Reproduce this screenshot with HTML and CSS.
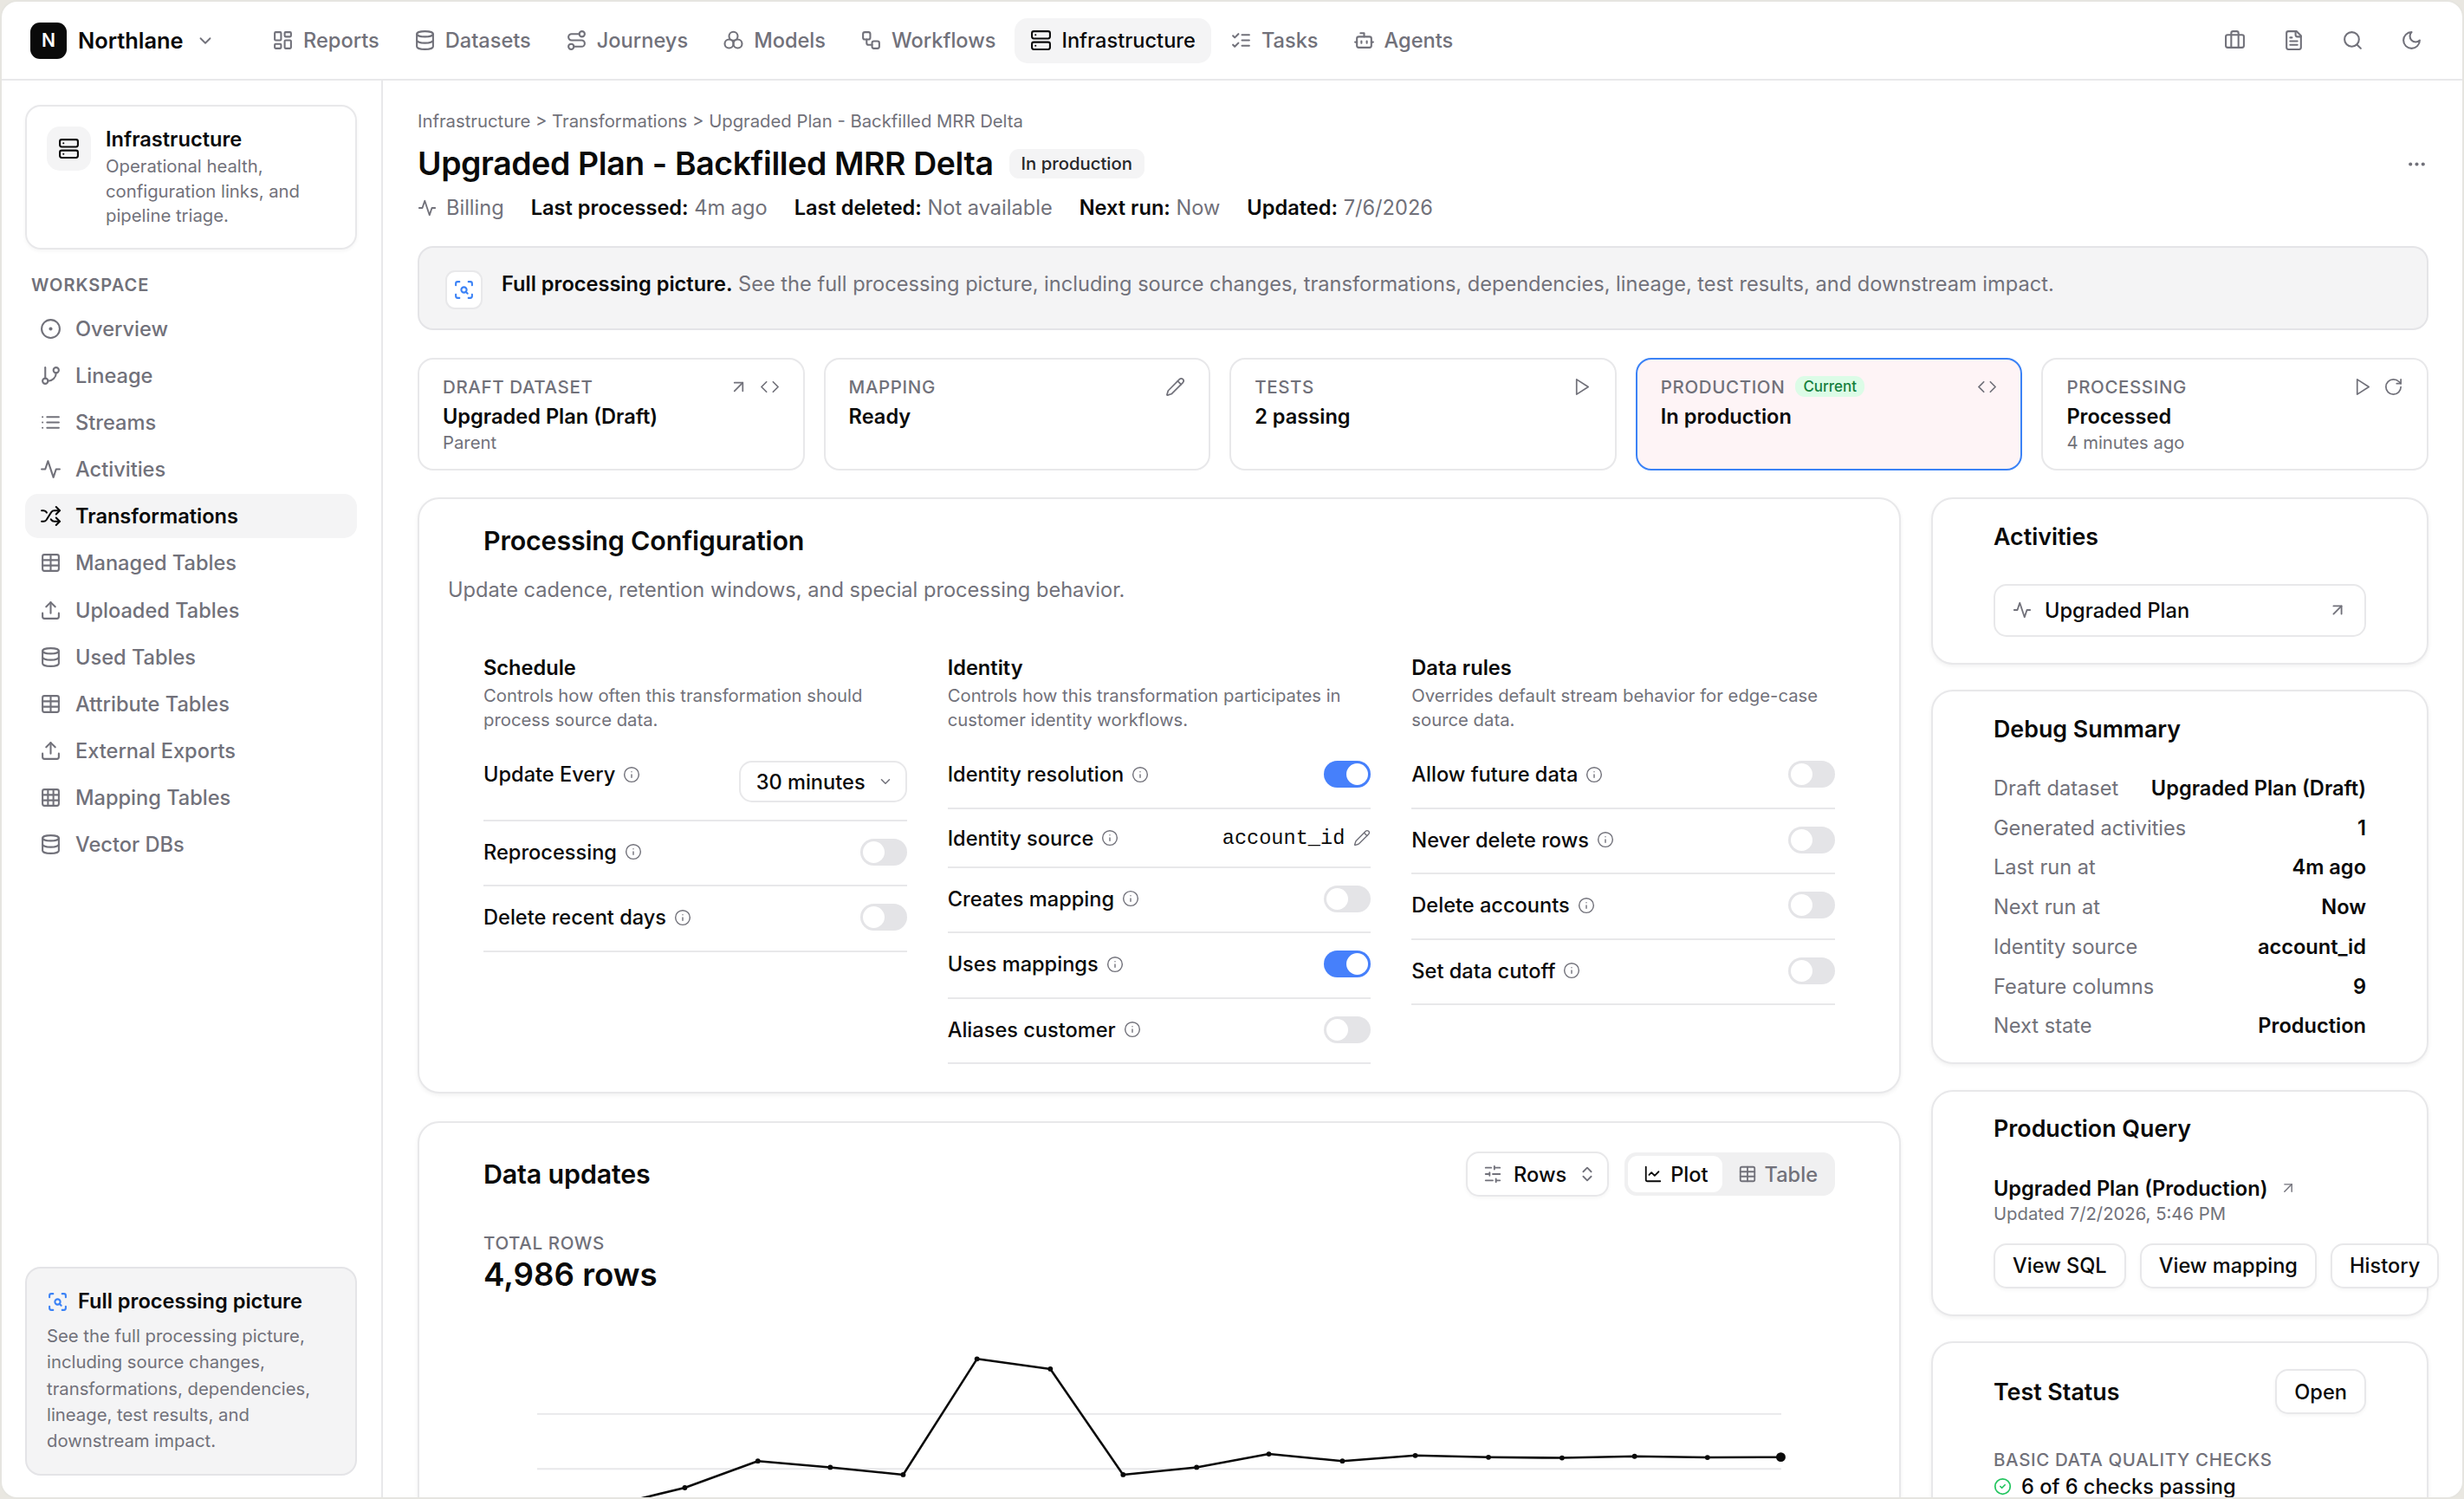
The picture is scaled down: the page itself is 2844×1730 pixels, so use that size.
FILE: index.html
```html
<!DOCTYPE html>
<html>
<head>
<title>Northlane</title>
<meta charset="UTF-8">
<link rel="stylesheet" href="styles.css">
</head>
<body>

<svg class="sprite" xmlns="http://www.w3.org/2000/svg">
  <symbol id="i-reports" viewBox="0 0 24 24"><rect x="3" y="3" width="7" height="9" rx="1"/><rect x="14" y="3" width="7" height="5" rx="1"/><rect x="14" y="12" width="7" height="9" rx="1"/><rect x="3" y="16" width="7" height="5" rx="1"/></symbol>
  <symbol id="i-db" viewBox="0 0 24 24"><ellipse cx="12" cy="5" rx="9" ry="3"/><path d="M3 5v14a9 3 0 0 0 18 0V5"/><path d="M3 12a9 3 0 0 0 18 0"/></symbol>
  <symbol id="i-route" viewBox="0 0 24 24"><circle cx="6" cy="19" r="3"/><path d="M9 19h8.5a3.5 3.5 0 0 0 0-7h-11a3.5 3.5 0 0 1 0-7H15"/><circle cx="18" cy="5" r="3"/></symbol>
  <symbol id="i-models" viewBox="0 0 24 24"><circle cx="12" cy="7.5" r="4.8"/><circle cx="7.2" cy="15.8" r="4.8"/><circle cx="16.8" cy="15.8" r="4.8"/></symbol>
  <symbol id="i-workflow" viewBox="0 0 24 24"><rect x="3" y="3" width="8" height="8" rx="2"/><path d="M7 11v4a2 2 0 0 0 2 2h4"/><rect x="13" y="13" width="8" height="8" rx="2"/></symbol>
  <symbol id="i-server" viewBox="0 0 24 24"><rect x="2" y="2" width="20" height="8" rx="2"/><rect x="2" y="14" width="20" height="8" rx="2"/><path d="M6 6h.01"/><path d="M6 18h.01"/></symbol>
  <symbol id="i-tasks" viewBox="0 0 24 24"><path d="m3 17 2 2 4-4"/><path d="m3 7 2 2 4-4"/><path d="M13 6h8"/><path d="M13 12h8"/><path d="M13 18h8"/></symbol>
  <symbol id="i-bot" viewBox="0 0 24 24"><path d="M12 8V4H8"/><rect x="4" y="8" width="16" height="12" rx="2"/><path d="M2 14h2"/><path d="M20 14h2"/><path d="M15 13v2"/><path d="M9 13v2"/></symbol>
  <symbol id="i-case" viewBox="0 0 24 24"><path d="M16 20V4a2 2 0 0 0-2-2h-4a2 2 0 0 0-2 2v16"/><rect x="2" y="6" width="20" height="14" rx="2"/></symbol>
  <symbol id="i-file" viewBox="0 0 24 24"><path d="M15 2H6a2 2 0 0 0-2 2v16a2 2 0 0 0 2 2h12a2 2 0 0 0 2-2V7Z"/><path d="M14 2v4a2 2 0 0 0 2 2h4"/><path d="M10 9H8"/><path d="M16 13H8"/><path d="M16 17H8"/></symbol>
  <symbol id="i-search" viewBox="0 0 24 24"><circle cx="11" cy="11" r="8"/><path d="m21 21-4.3-4.3"/></symbol>
  <symbol id="i-moon" viewBox="0 0 24 24"><path d="M12 3a6 6 0 0 0 9 9 9 9 0 1 1-9-9Z"/></symbol>
  <symbol id="i-chevron" viewBox="0 0 24 24"><path d="m6 9 6 6 6-6"/></symbol>
  <symbol id="i-dot" viewBox="0 0 24 24"><circle cx="12" cy="12" r="10"/><circle cx="12" cy="12" r="1"/></symbol>
  <symbol id="i-branch" viewBox="0 0 24 24"><path d="M6 3v12"/><circle cx="18" cy="6" r="3"/><circle cx="6" cy="18" r="3"/><path d="M18 9a9 9 0 0 1-9 9"/></symbol>
  <symbol id="i-list" viewBox="0 0 24 24"><path d="M3 12h.01"/><path d="M3 18h.01"/><path d="M3 6h.01"/><path d="M8 12h13"/><path d="M8 18h13"/><path d="M8 6h13"/></symbol>
  <symbol id="i-activity" viewBox="0 0 24 24"><path d="M22 12h-4l-3 9L9 3l-3 9H2"/></symbol>
  <symbol id="i-shuffle" viewBox="0 0 24 24"><path d="m18 14 4 4-4 4"/><path d="m18 2 4 4-4 4"/><path d="M2 18h1.973a4 4 0 0 0 3.3-1.7l5.454-8.6a4 4 0 0 1 3.3-1.7H22"/><path d="M2 6h1.972a4 4 0 0 1 3.6 2.2"/><path d="M22 18h-6.041a4 4 0 0 1-3.3-1.8l-.359-.45"/></symbol>
  <symbol id="i-table" viewBox="0 0 24 24"><rect x="3" y="3" width="18" height="18" rx="2"/><path d="M3 9h18"/><path d="M3 15h18"/><path d="M12 3v18"/></symbol>
  <symbol id="i-grid" viewBox="0 0 24 24"><rect x="3" y="3" width="18" height="18" rx="2"/><path d="M3 9h18"/><path d="M3 15h18"/><path d="M9 3v18"/><path d="M15 3v18"/></symbol>
  <symbol id="i-upload" viewBox="0 0 24 24"><path d="M21 15v4a2 2 0 0 1-2 2H5a2 2 0 0 1-2-2v-4"/><path d="m17 8-5-5-5 5"/><path d="M12 3v12"/></symbol>
  <symbol id="i-scan" viewBox="0 0 24 24"><path d="M3 7V5a2 2 0 0 1 2-2h2"/><path d="M17 3h2a2 2 0 0 1 2 2v2"/><path d="M21 17v2a2 2 0 0 1-2 2h-2"/><path d="M7 21H5a2 2 0 0 1-2-2v-2"/><circle cx="12" cy="12" r="3"/><path d="m16 16-1.9-1.9"/></symbol>
  <symbol id="i-arrow" viewBox="0 0 24 24"><path d="M7 7h10v10"/><path d="M7 17 17 7"/></symbol>
  <symbol id="i-code" viewBox="0 0 24 24"><path d="m16 18 6-6-6-6"/><path d="m8 6-6 6 6 6"/></symbol>
  <symbol id="i-pencil" viewBox="0 0 24 24"><path d="M21.174 6.812a1 1 0 0 0-3.986-3.987L3.842 16.174a2 2 0 0 0-.5.83l-1.321 4.352a.5.5 0 0 0 .623.622l4.353-1.32a2 2 0 0 0 .83-.497z"/><path d="m15 5 4 4"/></symbol>
  <symbol id="i-play" viewBox="0 0 24 24"><path d="M6 3l14 9-14 9z"/></symbol>
  <symbol id="i-refresh" viewBox="0 0 24 24"><path d="M21 12a9 9 0 1 1-9-9c2.52 0 4.93 1 6.74 2.74L21 8"/><path d="M21 3v5h-5"/></symbol>
  <symbol id="i-info" viewBox="0 0 24 24"><circle cx="12" cy="12" r="10"/><path d="M12 16v-4"/><path d="M12 8h.01"/></symbol>
  <symbol id="i-sliders" viewBox="0 0 24 24"><path d="M21 4h-7"/><path d="M10 4H3"/><path d="M21 12h-9"/><path d="M8 12H3"/><path d="M21 20h-5"/><path d="M12 20H3"/><path d="M14 2v4"/><path d="M8 10v4"/><path d="M16 18v4"/></symbol>
  <symbol id="i-updown" viewBox="0 0 24 24"><path d="m7 15 5 5 5-5"/><path d="m7 9 5-5 5 5"/></symbol>
  <symbol id="i-chart" viewBox="0 0 24 24"><path d="M3 3v16a2 2 0 0 0 2 2h16"/><path d="m19 9-5 5-4-4-3 3"/></symbol>
  <symbol id="i-check" viewBox="0 0 24 24"><circle cx="12" cy="12" r="10"/><path d="m9 12 2 2 4-4"/></symbol>
  <symbol id="i-more" viewBox="0 0 24 24"><circle cx="5" cy="12" r="1"/><circle cx="12" cy="12" r="1"/><circle cx="19" cy="12" r="1"/></symbol>
</svg>

<div class="app">

  <header class="topbar">
    <div class="brand">
      <span class="logo">N</span>
      <span class="brand-name">Northlane</span>
      <svg class="ico ico-sm"><use href="#i-chevron"/></svg>
    </div>
    <nav class="topnav">
      <a class="topnav-item"><svg class="ico"><use href="#i-reports"/></svg>Reports</a>
      <a class="topnav-item"><svg class="ico"><use href="#i-db"/></svg>Datasets</a>
      <a class="topnav-item"><svg class="ico"><use href="#i-route"/></svg>Journeys</a>
      <a class="topnav-item"><svg class="ico"><use href="#i-models"/></svg>Models</a>
      <a class="topnav-item"><svg class="ico"><use href="#i-workflow"/></svg>Workflows</a>
      <a class="topnav-item active"><svg class="ico"><use href="#i-server"/></svg>Infrastructure</a>
      <a class="topnav-item"><svg class="ico"><use href="#i-tasks"/></svg>Tasks</a>
      <a class="topnav-item"><svg class="ico"><use href="#i-bot"/></svg>Agents</a>
    </nav>
    <div class="top-tools">
      <svg class="ico"><use href="#i-case"/></svg>
      <svg class="ico"><use href="#i-file"/></svg>
      <svg class="ico"><use href="#i-search"/></svg>
      <svg class="ico"><use href="#i-moon"/></svg>
    </div>
  </header>

  <div class="body-wrap">

    <aside class="sidebar">
      <div class="side-card">
        <span class="side-card-icon"><svg class="ico ico-dark"><use href="#i-server"/></svg></span>
        <div>
          <div class="side-card-title">Infrastructure</div>
          <div class="side-card-desc">Operational health, configuration links, and pipeline triage.</div>
        </div>
      </div>

      <div class="side-heading">WORKSPACE</div>
      <nav class="sidenav">
        <a class="sidenav-item"><svg class="ico"><use href="#i-dot"/></svg>Overview</a>
        <a class="sidenav-item"><svg class="ico"><use href="#i-branch"/></svg>Lineage</a>
        <a class="sidenav-item"><svg class="ico"><use href="#i-list"/></svg>Streams</a>
        <a class="sidenav-item"><svg class="ico"><use href="#i-activity"/></svg>Activities</a>
        <a class="sidenav-item active"><svg class="ico ico-dark"><use href="#i-shuffle"/></svg>Transformations</a>
        <a class="sidenav-item"><svg class="ico"><use href="#i-table"/></svg>Managed Tables</a>
        <a class="sidenav-item"><svg class="ico"><use href="#i-upload"/></svg>Uploaded Tables</a>
        <a class="sidenav-item"><svg class="ico"><use href="#i-db"/></svg>Used Tables</a>
        <a class="sidenav-item"><svg class="ico"><use href="#i-table"/></svg>Attribute Tables</a>
        <a class="sidenav-item"><svg class="ico"><use href="#i-upload"/></svg>External Exports</a>
        <a class="sidenav-item"><svg class="ico"><use href="#i-grid"/></svg>Mapping Tables</a>
        <a class="sidenav-item"><svg class="ico"><use href="#i-db"/></svg>Vector DBs</a>
      </nav>

      <div class="side-callout">
        <div class="side-callout-title"><svg class="ico ico-blue"><use href="#i-scan"/></svg>Full processing picture</div>
        <div class="side-callout-desc">See the full processing picture, including source changes, transformations, dependencies, lineage, test results, and downstream impact.</div>
      </div>
    </aside>

    <main class="main">
      <div class="crumbs">Infrastructure &gt; Transformations &gt; Upgraded Plan - Backfilled MRR Delta</div>
      <div class="title-row">
        <h1>Upgraded Plan - Backfilled MRR Delta</h1>
        <span class="badge">In production</span>
        <svg class="ico title-more"><use href="#i-more"/></svg>
      </div>
      <div class="meta">
        <span class="meta-source"><svg class="ico"><use href="#i-activity"/></svg>Billing</span>
        <span><b>Last processed:</b> 4m ago</span>
        <span><b>Last deleted:</b> Not available</span>
        <span><b>Next run:</b> Now</span>
        <span><b>Updated:</b> 7/6/2026</span>
      </div>

      <div class="banner">
        <span class="banner-icon"><svg class="ico ico-blue"><use href="#i-scan"/></svg></span>
        <p><b>Full processing picture.</b> See the full processing picture, including source changes, transformations, dependencies, lineage, test results, and downstream impact.</p>
      </div>

      <div class="steps">
        <div class="step">
          <div class="step-head">
            <span class="label">DRAFT DATASET</span>
            <span class="step-tools"><svg class="ico"><use href="#i-arrow"/></svg><svg class="ico"><use href="#i-code"/></svg></span>
          </div>
          <div class="step-value">Upgraded Plan (Draft)</div>
          <div class="step-sub">Parent</div>
        </div>
        <div class="step">
          <div class="step-head">
            <span class="label">MAPPING</span>
            <span class="step-tools"><svg class="ico"><use href="#i-pencil"/></svg></span>
          </div>
          <div class="step-value">Ready</div>
        </div>
        <div class="step">
          <div class="step-head">
            <span class="label">TESTS</span>
            <span class="step-tools"><svg class="ico"><use href="#i-play"/></svg></span>
          </div>
          <div class="step-value">2 passing</div>
        </div>
        <div class="step current">
          <div class="step-head">
            <span class="label">PRODUCTION <span class="pill-current">Current</span></span>
            <span class="step-tools"><svg class="ico"><use href="#i-code"/></svg></span>
          </div>
          <div class="step-value">In production</div>
        </div>
        <div class="step">
          <div class="step-head">
            <span class="label">PROCESSING</span>
            <span class="step-tools"><svg class="ico"><use href="#i-play"/></svg><svg class="ico"><use href="#i-refresh"/></svg></span>
          </div>
          <div class="step-value">Processed</div>
          <div class="step-sub">4 minutes ago</div>
        </div>
      </div>

      <div class="columns">
        <div class="col-left">

          <section class="card config">
            <h2>Processing Configuration</h2>
            <p class="config-desc">Update cadence, retention windows, and special processing behavior.</p>
            <div class="config-grid">
              <div>
                <h3>Schedule</h3>
                <p class="group-desc">Controls how often this transformation should process source data.</p>
                <div class="row">
                  <span class="row-label">Update Every <svg class="ico ico-info"><use href="#i-info"/></svg></span>
                  <span class="select">30 minutes <svg class="ico"><use href="#i-chevron"/></svg></span>
                </div>
                <div class="row">
                  <span class="row-label">Reprocessing <svg class="ico ico-info"><use href="#i-info"/></svg></span>
                  <span class="toggle"></span>
                </div>
                <div class="row">
                  <span class="row-label">Delete recent days <svg class="ico ico-info"><use href="#i-info"/></svg></span>
                  <span class="toggle"></span>
                </div>
              </div>
              <div>
                <h3>Identity</h3>
                <p class="group-desc">Controls how this transformation participates in customer identity workflows.</p>
                <div class="row">
                  <span class="row-label">Identity resolution <svg class="ico ico-info"><use href="#i-info"/></svg></span>
                  <span class="toggle on"></span>
                </div>
                <div class="row row-tight">
                  <span class="row-label">Identity source <svg class="ico ico-info"><use href="#i-info"/></svg></span>
                  <span class="source-value"><code>account_id</code><svg class="ico ico-info"><use href="#i-pencil"/></svg></span>
                </div>
                <div class="row">
                  <span class="row-label">Creates mapping <svg class="ico ico-info"><use href="#i-info"/></svg></span>
                  <span class="toggle"></span>
                </div>
                <div class="row">
                  <span class="row-label">Uses mappings <svg class="ico ico-info"><use href="#i-info"/></svg></span>
                  <span class="toggle on"></span>
                </div>
                <div class="row">
                  <span class="row-label">Aliases customer <svg class="ico ico-info"><use href="#i-info"/></svg></span>
                  <span class="toggle"></span>
                </div>
              </div>
              <div>
                <h3>Data rules</h3>
                <p class="group-desc">Overrides default stream behavior for edge-case source data.</p>
                <div class="row">
                  <span class="row-label">Allow future data <svg class="ico ico-info"><use href="#i-info"/></svg></span>
                  <span class="toggle"></span>
                </div>
                <div class="row">
                  <span class="row-label">Never delete rows <svg class="ico ico-info"><use href="#i-info"/></svg></span>
                  <span class="toggle"></span>
                </div>
                <div class="row">
                  <span class="row-label">Delete accounts <svg class="ico ico-info"><use href="#i-info"/></svg></span>
                  <span class="toggle"></span>
                </div>
                <div class="row">
                  <span class="row-label">Set data cutoff <svg class="ico ico-info"><use href="#i-info"/></svg></span>
                  <span class="toggle"></span>
                </div>
              </div>
            </div>
          </section>

          <section class="card updates">
            <div class="updates-head">
              <h2>Data updates</h2>
              <div class="updates-tools">
                <span class="btn btn-rows"><svg class="ico ico-sm"><use href="#i-sliders"/></svg>Rows<svg class="ico ico-sm"><use href="#i-updown"/></svg></span>
                <span class="segment">
                  <span class="segment-item active"><svg class="ico ico-sm ico-dark"><use href="#i-chart"/></svg>Plot</span>
                  <span class="segment-item"><svg class="ico ico-sm"><use href="#i-table"/></svg>Table</span>
                </span>
              </div>
            </div>
            <div class="total-label label">TOTAL ROWS</div>
            <div class="total-value">4,986 rows</div>
            <svg class="chart" viewBox="266 843 942 140">
              <path class="grid" d="M341 898H1133M341 933H1133M341 968H1133"/>
              <path class="line" d="M341.8 975L388.4 956.3L435 945L481.5 928L527.6 932L574 936.7L621 863L667.7 869.4L714 936.7L760.8 932L806.8 923.5L853.6 928L900 924.5L946.6 925.6L993.4 926L1039.6 925L1086 925.7L1132.7 925.5"/>
              <g class="dots">
                <circle cx="435" cy="945" r="1.6"/><circle cx="481.5" cy="928" r="1.6"/><circle cx="527.6" cy="932" r="1.6"/><circle cx="574" cy="936.7" r="1.6"/><circle cx="621" cy="863" r="1.6"/><circle cx="667.7" cy="869.4" r="1.6"/><circle cx="714" cy="936.7" r="1.6"/><circle cx="760.8" cy="932" r="1.6"/><circle cx="806.8" cy="923.5" r="1.6"/><circle cx="853.6" cy="928" r="1.6"/><circle cx="900" cy="924.5" r="1.6"/><circle cx="946.6" cy="925.6" r="1.6"/><circle cx="993.4" cy="926" r="1.6"/><circle cx="1039.6" cy="925" r="1.6"/><circle cx="1086" cy="925.7" r="1.6"/><circle cx="1132.7" cy="925.5" r="3"/>
              </g>
            </svg>
          </section>

        </div>

        <div class="col-right">

          <section class="card rail rail-activities">
            <h4>Activities</h4>
            <div class="activity-link">
              <svg class="ico ico-sm"><use href="#i-activity"/></svg>
              <span>Upgraded Plan</span>
              <svg class="ico ico-sm"><use href="#i-arrow"/></svg>
            </div>
          </section>

          <section class="card rail rail-debug">
            <h4>Debug Summary</h4>
            <dl class="summary">
              <div><dt>Draft dataset</dt><dd>Upgraded Plan (Draft)</dd></div>
              <div><dt>Generated activities</dt><dd>1</dd></div>
              <div><dt>Last run at</dt><dd>4m ago</dd></div>
              <div><dt>Next run at</dt><dd>Now</dd></div>
              <div><dt>Identity source</dt><dd>account_id</dd></div>
              <div><dt>Feature columns</dt><dd>9</dd></div>
              <div><dt>Next state</dt><dd>Production</dd></div>
            </dl>
          </section>

          <section class="card rail rail-query">
            <h4>Production Query</h4>
            <div class="query-name">Upgraded Plan (Production) <svg class="ico ico-info"><use href="#i-arrow"/></svg></div>
            <div class="query-date">Updated 7/2/2026, 5:46 PM</div>
            <div class="query-buttons">
              <span class="btn">View SQL</span>
              <span class="btn">View mapping</span>
              <span class="btn">History</span>
            </div>
          </section>

          <section class="card rail rail-tests">
            <div class="tests-head">
              <h4>Test Status</h4>
              <span class="btn">Open</span>
            </div>
            <div class="label tests-label">BASIC DATA QUALITY CHECKS</div>
            <div class="tests-line"><svg class="ico ico-check"><use href="#i-check"/></svg>6 of 6 checks passing</div>
          </section>

        </div>
      </div>
    </main>

  </div>
</div>

</body>
</html>
```

FILE: styles.css
```css
* {
  box-sizing: border-box;
}
html {
  background: #e9e7e1;
}
body {
  margin: 0;
  font-family: Inter, "Noto Sans", sans-serif;
  font-size: 23.6px;
  color: #0a0a0a;
}
h1, h2, h3, h4, p, dl, dd {
  margin: 0;
}
.sprite {
  display: none;
}

/* icons */
.ico {
  width: 25px;
  height: 25px;
  flex: none;
  fill: none;
  stroke: #71717a;
  stroke-width: 2;
  stroke-linecap: round;
  stroke-linejoin: round;
}
.ico-sm {
  width: 22px;
  height: 22px;
}
.ico-dark {
  stroke: #0a0a0a;
}
.ico-blue {
  stroke: #3b82f6;
}
.ico-info {
  width: 20px;
  height: 20px;
  stroke-width: 1.7;
}
.ico-check {
  width: 21px;
  height: 21px;
  stroke: #22c55e;
}

/* frame */
.app {
  width: 2844px;
  height: 1730px;
  overflow: hidden;
  background: #fff;
  border: 2px solid #e6e5e0;
  border-radius: 20px;
  display: flex;
  flex-direction: column;
}

/* top bar */
.topbar {
  height: 91px;
  flex: none;
  display: flex;
  align-items: center;
  padding: 0 46px 0 33px;
  border-bottom: 2px solid #e8e8ea;
}
.brand {
  display: flex;
  align-items: center;
  width: 261px;
}
.logo {
  width: 42px;
  height: 42px;
  border-radius: 11px;
  background: #0a0a0a;
  color: #fff;
  font-size: 21px;
  font-weight: 600;
  display: flex;
  align-items: center;
  justify-content: center;
  margin-right: 13px;
}
.brand-name {
  font-size: 25.4px;
  font-weight: 600;
  margin-right: 14px;
}
.topnav {
  display: flex;
  gap: 4px;
}
.topnav-item {
  height: 52px;
  padding: 0 18px;
  display: flex;
  align-items: center;
  gap: 11px;
  font-weight: 500;
  color: #71717a;
  border-radius: 15px;
}
.topnav-item.active {
  background: #f4f4f5;
  color: #0a0a0a;
}
.topnav-item.active .ico {
  stroke: #0a0a0a;
}
.top-tools {
  margin-left: auto;
  display: flex;
  gap: 43px;
}

.body-wrap {
  flex: 1;
  display: flex;
  min-height: 0;
}

/* sidebar */
.sidebar {
  width: 440px;
  flex: none;
  border-right: 2px solid #e8e8ea;
  padding: 28px 28px 25px 27px;
  display: flex;
  flex-direction: column;
}
.side-card {
  display: flex;
  flex: none;
  gap: 17px;
  height: 167px;
  padding: 23px;
  border: 2px solid #e8e8ea;
  border-radius: 18px;
  box-shadow: 0 2px 4px rgba(0, 0, 0, .04);
}
.side-card-icon {
  width: 51px;
  height: 51px;
  flex: none;
  border-radius: 15px;
  background: #f4f4f5;
  display: flex;
  align-items: center;
  justify-content: center;
}
.side-card-title {
  font-weight: 600;
  line-height: 30px;
}
.side-card-desc {
  font-size: 20.3px;
  line-height: 28.5px;
  color: #71717a;
  margin-top: 2px;
}
.side-heading {
  flex: none;
  font-size: 20px;
  font-weight: 600;
  letter-spacing: 1px;
  color: #71717a;
  margin: 28px 0 0 7px;
  line-height: 26px;
}
.sidenav {
  margin-top: 12px;
  display: flex;
  flex-direction: column;
  gap: 3.1px;
}
.sidenav-item {
  height: 51px;
  padding: 0 17px;
  display: flex;
  align-items: center;
  gap: 16px;
  font-weight: 500;
  color: #71717a;
  border-radius: 15px;
}
.sidenav-item.active {
  background: #f4f4f5;
  color: #0a0a0a;
  font-weight: 600;
}
.side-callout {
  margin-top: auto;
  height: 241px;
  flex: none;
  padding: 23px;
  background: #f4f4f5;
  border: 2px solid #e4e4e7;
  border-radius: 18px;
}
.side-callout-title {
  display: flex;
  align-items: center;
  gap: 11px;
  font-weight: 600;
  line-height: 30px;
}
.side-callout-desc {
  margin-top: 10px;
  font-size: 20.3px;
  line-height: 30.3px;
  color: #71717a;
}

/* main */
.main {
  flex: 1;
  min-width: 0;
  padding: 33px 39px 0 40px;
}
.crumbs {
  font-size: 20.3px;
  line-height: 28px;
  color: #71717a;
}
.title-row {
  display: flex;
  align-items: center;
  margin-top: 10px;
  height: 50px;
}
h1 {
  font-size: 37.4px;
  font-weight: 600;
  letter-spacing: -.01em;
  line-height: 50px;
}
.badge {
  margin-left: 18px;
  height: 34px;
  padding: 0 14px;
  font-size: 20.3px;
  font-weight: 500;
  line-height: 34px;
  background: #f4f4f5;
  border-radius: 11px;
  color: #27272a;
}
.title-more {
  margin-left: auto;
  margin-right: 1px;
}
.meta {
  display: flex;
  gap: 31px;
  margin-top: 8px;
  line-height: 36px;
  color: #71717a;
}
.meta b {
  font-weight: 600;
  color: #0a0a0a;
}
.meta-source {
  display: flex;
  align-items: center;
  gap: 11px;
}
.meta-source .ico {
  width: 22px;
  height: 22px;
}

.banner {
  display: flex;
  gap: 22px;
  height: 97px;
  margin-top: 26px;
  padding: 24px 30px;
  background: #f4f4f5;
  border: 2px solid #e4e4e7;
  border-radius: 18px;
  color: #71717a;
}
.banner b {
  font-weight: 600;
  color: #0a0a0a;
}
.banner p {
  line-height: 36px;
}
.banner-icon {
  width: 43px;
  height: 45px;
  flex: none;
  margin-top: 2px;
  background: #fff;
  border: 2px solid #e8e8ea;
  border-radius: 11px;
  display: flex;
  align-items: center;
  justify-content: center;
}

.steps {
  display: grid;
  grid-template-columns: repeat(5, 1fr);
  gap: 22px;
  margin-top: 32px;
}
.step {
  height: 130px;
  padding: 17px 27px;
  border: 2px solid #e8e8ea;
  border-radius: 18px;
}
.step.current {
  background: #fef4f6;
  border-color: #3b82f6;
}
.step-head {
  display: flex;
  justify-content: space-between;
  align-items: center;
  height: 29px;
}
.step-tools {
  display: flex;
  gap: 13px;
}
.step-tools .ico {
  width: 23px;
  height: 23px;
  stroke-width: 1.8;
}
.label {
  font-size: 20.5px;
  font-weight: 500;
  letter-spacing: .03em;
  color: #71717a;
}
.pill-current {
  display: inline-block;
  margin-left: 6px;
  padding: 0 9px;
  font-size: 17px;
  line-height: 24px;
  letter-spacing: 0;
  color: #15803d;
  background: #dcfce7;
  border-radius: 11px;
  vertical-align: 2px;
}
.step-value {
  margin-top: 4px;
  font-weight: 600;
  line-height: 32px;
}
.step-sub {
  font-size: 20.3px;
  line-height: 27px;
  color: #71717a;
}

.columns {
  display: grid;
  grid-template-columns: 1712px 574px;
  gap: 35px;
  margin-top: 31px;
}
.col-left, .col-right {
  display: flex;
  flex-direction: column;
}
.col-left {
  gap: 32px;
}
.col-right {
  gap: 29.5px;
}
.card {
  background: #fff;
  border: 2px solid #e8e8ea;
  border-radius: 25px;
  box-shadow: 0 2px 5px rgba(0, 0, 0, .06);
}

/* configuration card */
.config {
  height: 688px;
  padding: 26px 74px 0;
}
h2 {
  font-size: 30.4px;
  font-weight: 600;
  line-height: 44px;
  letter-spacing: -.005em;
}
.config-desc {
  margin: 17px 0 0 -41px;
  line-height: 36px;
  color: #71717a;
}
.config-grid {
  display: grid;
  grid-template-columns: repeat(3, 1fr);
  gap: 47px;
  margin-top: 56px;
}
h3 {
  font-size: 23.6px;
  font-weight: 600;
  line-height: 31px;
}
.group-desc {
  margin: 2.6px 0 33px;
  font-size: 20.3px;
  line-height: 28.2px;
  color: #71717a;
}
.row {
  display: flex;
  justify-content: space-between;
  align-items: flex-start;
  padding: 20px 0 22.5px;
  border-bottom: 2px solid #e8e8ea;
}
.row:nth-of-type(1) {
  padding-top: 0;
}
.row-tight {
  padding: 18px 0 17px;
}
.row-label {
  display: flex;
  align-items: center;
  gap: 9px;
  font-weight: 500;
  line-height: 31px;
}
.select {
  display: flex;
  align-items: center;
  justify-content: space-between;
  width: 194px;
  height: 48px;
  margin-bottom: -3px;
  padding: 0 14px 0 18px;
  font-weight: 500;
  border: 2px solid #e8e8ea;
  border-radius: 15px;
}
.select .ico {
  width: 18px;
  height: 18px;
}
.toggle {
  position: relative;
  width: 54px;
  height: 31px;
  border-radius: 16px;
  background: #e4e4e7;
}
.toggle::after {
  content: "";
  position: absolute;
  top: 3px;
  left: 3px;
  width: 25px;
  height: 25px;
  border-radius: 50%;
  background: #fff;
}
.toggle.on {
  background: #4680fb;
}
.toggle.on::after {
  left: 26px;
}
.source-value {
  display: flex;
  align-items: center;
  gap: 10px;
  line-height: 31px;
}
code {
  font-family: "Liberation Mono", monospace;
  font-size: 23.6px;
}

/* data updates */
.updates {
  height: 720px;
}
.updates-head {
  display: flex;
  justify-content: space-between;
  align-items: center;
  padding: 33px 74px 0;
}
.updates-tools {
  display: flex;
  gap: 18px;
}
.btn {
  display: inline-flex;
  align-items: center;
  white-space: nowrap;
  height: 52px;
  padding: 0 20px;
  font-weight: 500;
  background: #fff;
  border: 2px solid #e8e8ea;
  border-radius: 15px;
  box-shadow: 0 2px 4px rgba(0, 0, 0, .04);
}
.btn-rows {
  gap: 13px;
  padding: 0 12px 0 18px;
}
.segment {
  display: flex;
  height: 50px;
  margin-top: 1px;
  padding: 4px;
  background: #f0f0f1;
  border-radius: 14px;
}
.segment-item {
  display: flex;
  align-items: center;
  gap: 9px;
  padding: 0 16px 0 18px;
  font-weight: 500;
  color: #71717a;
  border-radius: 11px;
}
.segment-item.active {
  background: #fff;
  color: #0a0a0a;
}
.total-label {
  margin: 39px 0 0 74px;
  line-height: 29px;
}
.total-value {
  margin: -1px 0 0 74px;
  font-size: 36.7px;
  font-weight: 600;
  line-height: 46px;
}
.chart {
  display: block;
  width: 1708px;
  height: 254px;
  margin-top: 38px;
}
.chart .grid {
  fill: none;
  stroke: #e8e8ea;
  stroke-width: 1;
}
.chart .line {
  fill: none;
  stroke: #0a0a0a;
  stroke-width: 1.4;
  stroke-linejoin: round;
}
.chart .dots {
  fill: #0a0a0a;
}

/* right rail */
.rail {
  padding: 22.5px 70px 30px;
}
h4 {
  font-size: 26.8px;
  font-weight: 600;
  line-height: 40px;
}
.activity-link {
  display: flex;
  align-items: center;
  gap: 15px;
  height: 61px;
  margin-top: 35px;
  padding: 0 20px;
  font-weight: 500;
  border: 2px solid #e8e8ea;
  border-radius: 15px;
}
.activity-link span {
  flex: 1;
}
.rail-debug {
  padding-bottom: 19.5px;
}
.summary {
  margin-top: 26.6px;
}
.summary div {
  display: flex;
  justify-content: space-between;
  height: 45.7px;
  line-height: 45.7px;
}
.summary dt {
  color: #71717a;
}
.summary dd {
  font-weight: 600;
}
.query-name {
  display: flex;
  align-items: center;
  gap: 14px;
  margin-top: 32.5px;
  font-weight: 600;
  line-height: 33px;
}
.query-date {
  font-size: 20.3px;
  line-height: 26px;
  color: #71717a;
}
.query-buttons {
  display: flex;
  gap: 16px;
  margin-top: 21px;
}
.rail-tests {
  padding-top: 30px;
}
.tests-head {
  display: flex;
  justify-content: space-between;
  align-items: center;
}
.tests-label {
  margin-top: 38px;
  line-height: 29px;
}
.tests-line {
  display: flex;
  align-items: center;
  gap: 11px;
  line-height: 33px;
  font-weight: 500;
}
```
